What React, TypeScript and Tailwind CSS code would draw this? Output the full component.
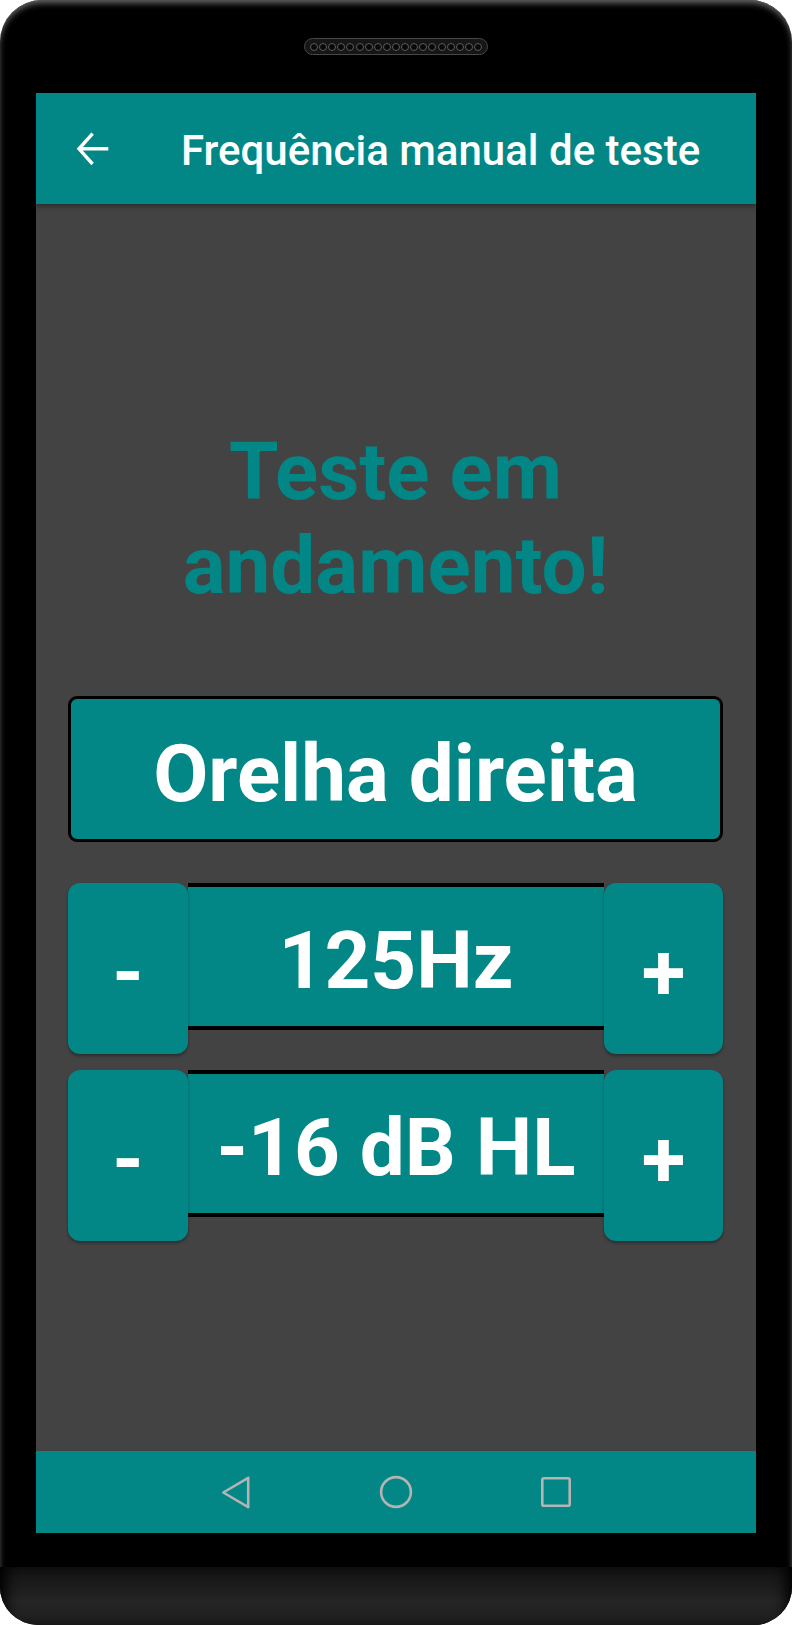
import { FC } from 'react';

const holes = Array.from({ length: 19 }, (_, i) => i);

type StepperRowProps = {
  value: string;
};

const StepperRow: FC<StepperRowProps> = ({ value }) => {
  return (
    <div className="flex items-start">
      <div className="relative z-10 w-[120px] h-[171px] shrink-0 rounded-[12px] bg-[#028786] shadow-[0_2px_3px_rgba(0,0,0,0.35)] pt-[43px] text-center text-[80px] leading-[94px] font-bold text-white">
        -
      </div>
      <div className="flex-1 h-[147px] border-y-4 border-black bg-[#028786] pt-[27px] text-center text-[80px] leading-[94px] font-bold text-white whitespace-nowrap">
        {value}
      </div>
      <div className="relative z-10 w-[119px] h-[171px] shrink-0 rounded-[12px] bg-[#028786] shadow-[0_2px_3px_rgba(0,0,0,0.35)] pt-[43px] text-center text-[80px] leading-[94px] font-bold text-white">
        +
      </div>
    </div>
  );
};

const App: FC = () => {
  return (
    <div className="w-[792px] h-[1625px] bg-white font-['Roboto',sans-serif]">
      <div className="flex flex-col w-[792px] h-[1625px] rounded-t-[42px] rounded-b-[38px] overflow-hidden bg-black shadow-[inset_0_4px_6px_-1px_#6a6a6a]">
        {/* top bezel with speaker */}
        <div className="h-[93px] shrink-0 pt-[38px]">
          <div className="mx-auto flex items-center justify-between w-[184px] h-[17px] px-[5px] rounded-full bg-[#161616] border border-[#474747]">
            {holes.map((h) => (
              <span
                key={h}
                className="block w-[8px] h-[8px] rounded-full border border-[#5c5c5c] bg-[#080808]"
              />
            ))}
          </div>
        </div>

        {/* screen */}
        <div className="ml-[36px] w-[720px] h-[1440px] shrink-0 flex flex-col">
          <div className="relative z-10 h-[111px] shrink-0 flex items-center bg-[#028786] shadow-[0_3px_4px_rgba(0,0,0,0.3)]">
            <svg className="ml-[33px] w-[48px] h-[48px]" viewBox="0 0 48 48" fill="none">
              <path
                d="M39.3 23.8H11M23.6 8.6L10 23.8L23.6 39"
                stroke="#ffffff"
                strokeWidth="3.4"
              />
            </svg>
            <h1 className="ml-[64px] pt-[4px] text-[42px] leading-[49px] font-medium text-white">
              Frequência manual de teste
            </h1>
          </div>

          <div className="flex-1 flex flex-col bg-[#434343] pl-[32px] pr-[33px]">
            <p className="mt-[222px] text-center text-[80px] leading-[93.75px] font-bold text-[#028786]">
              Teste em
              <br />
              andamento!
            </p>

            <div className="mt-[82px] h-[146px] rounded-[9px] border-[3px] border-black bg-[#028786] pt-[28px] text-center text-[80px] leading-[94px] font-bold text-white">
              Orelha direita
            </div>

            <div className="mt-[41px] flex flex-col gap-[16px]">
              <StepperRow value="125Hz" />
              <StepperRow value="-16 dB HL" />
            </div>
          </div>

          <div className="h-[82px] shrink-0 flex items-center justify-center gap-[120px] bg-[#028786]">
            <svg className="w-[40px] h-[40px]" viewBox="0 0 40 40" fill="none">
              <path
                d="M32.2 5.8L7.3 20.5L32.2 35.2Z"
                stroke="#b4b4b4"
                strokeWidth="2.6"
                strokeLinejoin="round"
              />
            </svg>
            <svg className="w-[40px] h-[40px]" viewBox="0 0 40 40" fill="none">
              <circle cx="20" cy="20" r="14.9" stroke="#b4b4b4" strokeWidth="2.6" />
            </svg>
            <svg className="w-[40px] h-[40px]" viewBox="0 0 40 40" fill="none">
              <rect x="6.3" y="6.3" width="27.4" height="27.4" rx="1.5" stroke="#b4b4b4" strokeWidth="2.6" />
            </svg>
          </div>
        </div>

        {/* bottom black strip and chin */}
        <div className="h-[34px] shrink-0" />
        <div className="h-[58px] shrink-0 bg-[linear-gradient(to_bottom,#111111,#252525_60%,#1d1d1d)] shadow-[inset_14px_0_14px_-8px_#000,inset_-14px_0_14px_-8px_#000]" />
      </div>
    </div>
  );
};

export default App;
